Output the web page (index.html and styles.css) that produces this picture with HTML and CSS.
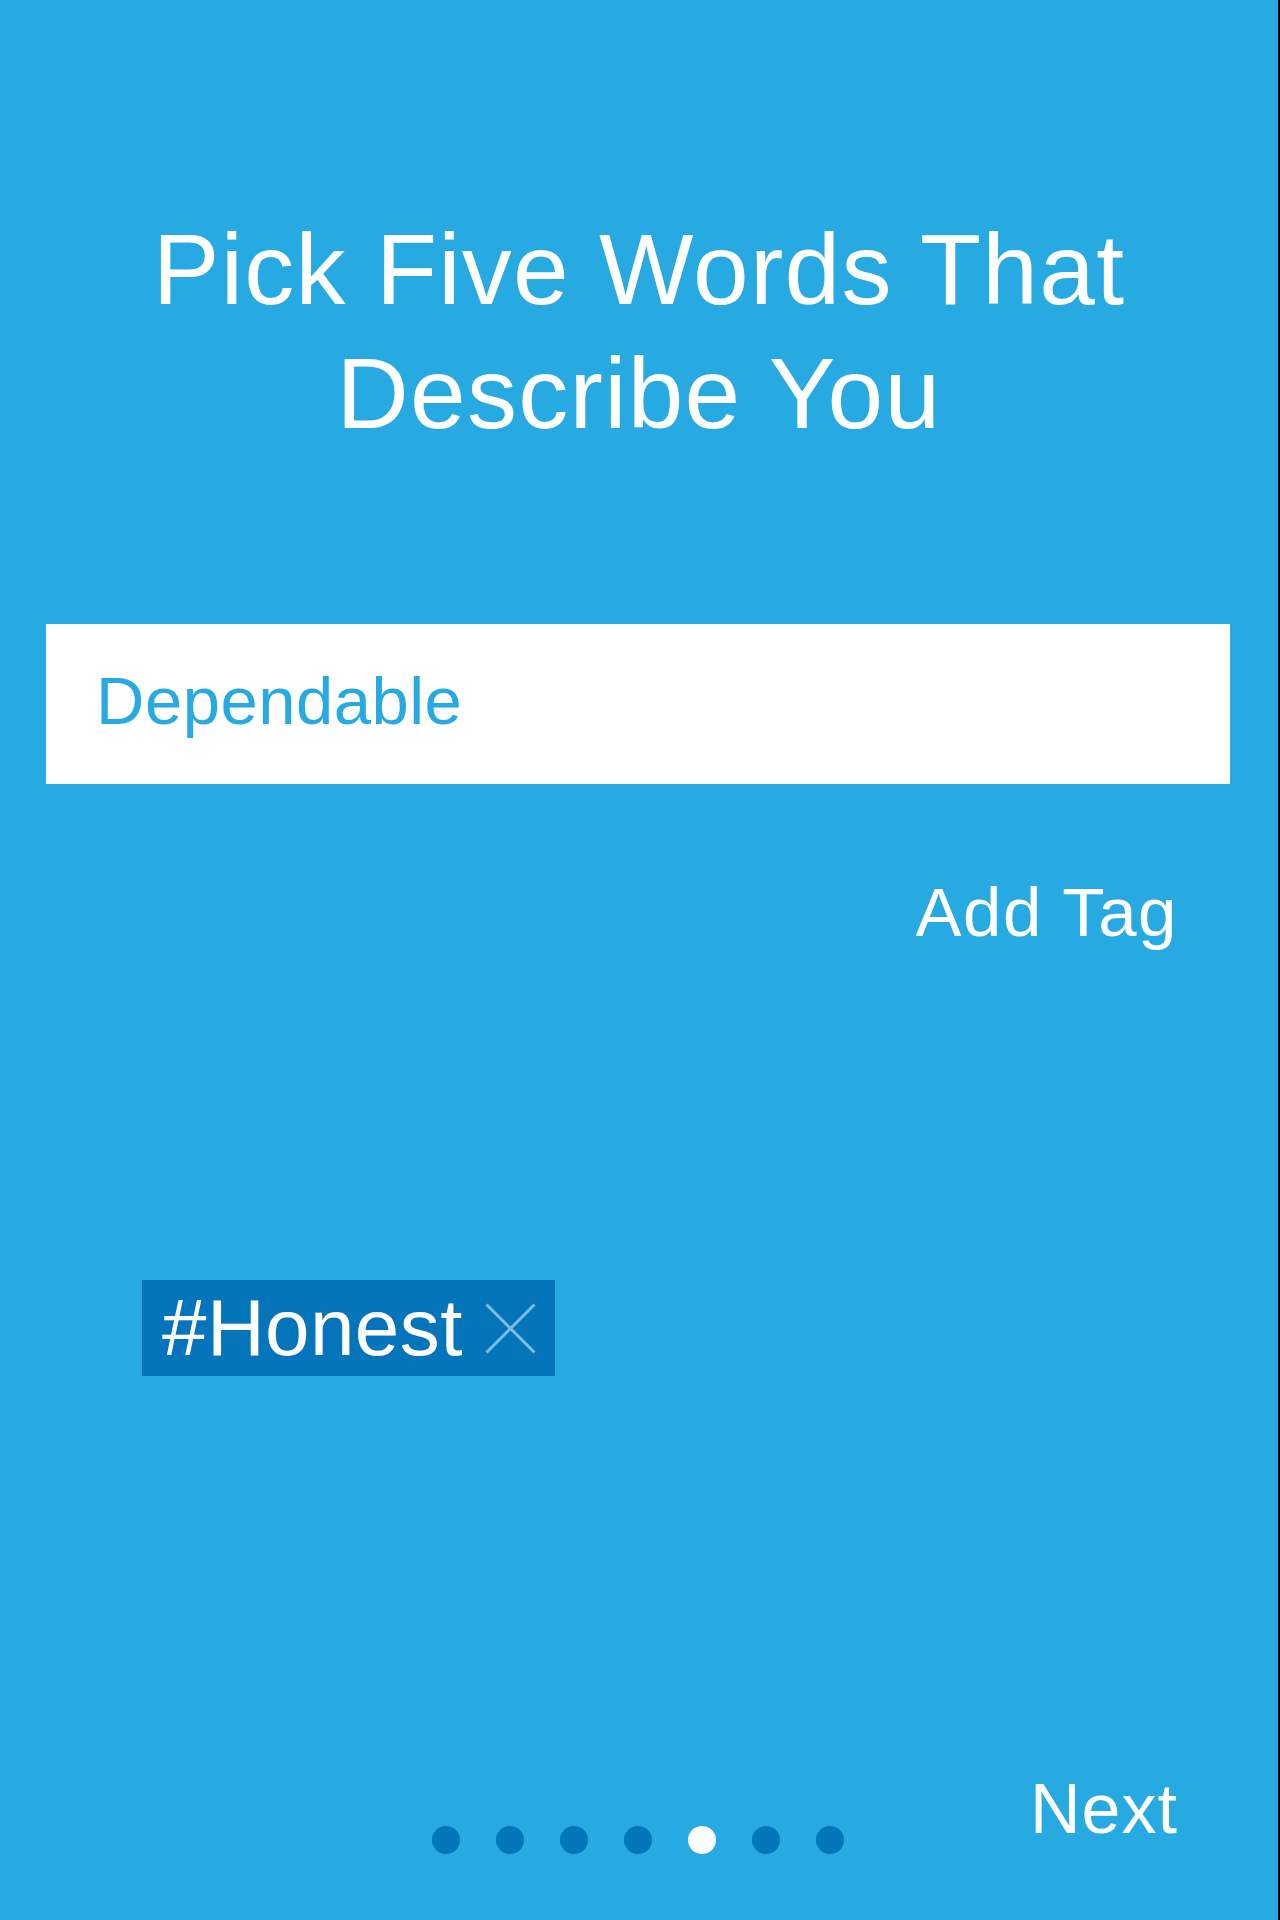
FILE: index.html
```html
<!DOCTYPE html>
<html lang="en">
<head>
<meta charset="utf-8">
<title>Pick Five Words</title>
<link rel="stylesheet" href="styles.css">
</head>
<body>
<div class="screen">
  <h1 class="title">Pick Five Words That<br>Describe You</h1>
  <div class="input-box">Dependable</div>
  <div class="add-row"><span class="add-tag">Add Tag</span></div>
  <div class="tag-list">
    <div class="tag">
      <span class="tag-text">#Honest</span>
      <svg class="tag-x" width="51" height="51" viewBox="0 0 51 51"><path d="M1.5 1.5 L49.5 49.5 M49.5 1.5 L1.5 49.5" stroke="#7dbde3" stroke-width="3" fill="none"/></svg>
    </div>
  </div>
  <div class="footer">
    <div class="spacer"></div>
    <div class="dots">
      <span class="dot"></span>
      <span class="dot"></span>
      <span class="dot"></span>
      <span class="dot"></span>
      <span class="dot active"></span>
      <span class="dot"></span>
      <span class="dot"></span>
    </div>
    <div class="next-wrap"><span class="next">Next</span></div>
  </div>
</div>
</body>
</html>
```

FILE: styles.css
```css
html, body {
  margin: 0;
  padding: 0;
  background: #000;
}
body {
  width: 1280px;
  height: 1920px;
  font-family: "Liberation Sans", Arial, sans-serif;
}
.screen {
  width: 1278px;
  height: 1920px;
  background: #27aae1;
  display: flex;
  flex-direction: column;
  color: #fff;
  overflow: hidden;
}
.title {
  margin: 207px 0 0 0;
  font-size: 100px;
  line-height: 124px;
  font-weight: 400;
  letter-spacing: 1.3px;
  text-align: center;
  color: #fff;
}
.input-box {
  margin: 169px 48px 0 46px;
  height: 160px;
  background: #fff;
  color: #27aae1;
  font-size: 67px;
  line-height: 154px;
  letter-spacing: 0.5px;
  padding-left: 50px;
  box-sizing: border-box;
}
.add-row {
  display: flex;
  justify-content: flex-end;
  padding-right: 100px;
  margin-top: 89px;
}
.add-tag {
  font-size: 69px;
  line-height: 80px;
  letter-spacing: 1.5px;
}
.tag-list {
  display: flex;
  margin-top: 327px;
  padding-left: 142px;
}
.tag {
  display: flex;
  align-items: center;
  height: 96px;
  background: #0474bb;
  padding: 0 19px 0 20px;
  gap: 22px;
}
.tag-text {
  font-size: 80px;
  line-height: 96px;
  letter-spacing: 0.4px;
}
.tag-x {
  display: block;
}
.footer {
  display: grid;
  grid-template-columns: 1fr auto 1fr;
  align-items: start;
  margin-top: auto;
  height: 151px;
}
.dots {
  display: flex;
  gap: 36px;
  margin-top: 57px;
  margin-right: 2px;
}
.dot {
  width: 28px;
  height: 28px;
  border-radius: 50%;
  background: #0474bb;
}
.dot.active {
  background: #fff;
}
.next-wrap {
  display: flex;
  justify-content: flex-end;
  padding-right: 100px;
}
.next {
  font-size: 70px;
  line-height: 80px;
  letter-spacing: 1px;
}
```
